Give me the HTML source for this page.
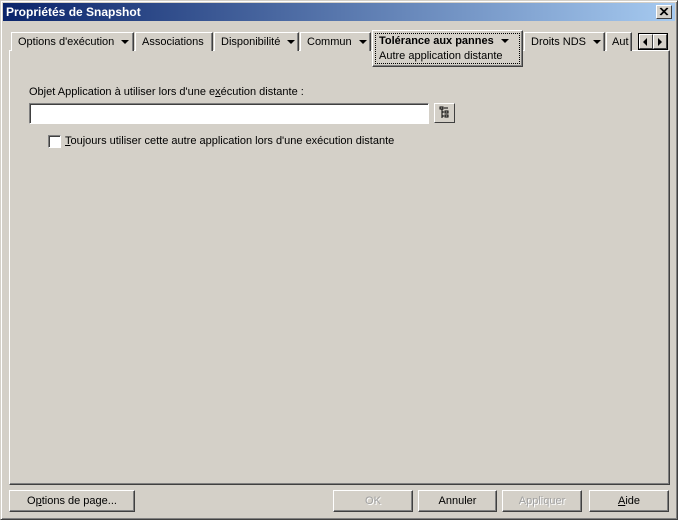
<!DOCTYPE html><html><head><style>
*{box-sizing:border-box;margin:0;padding:0}
body{width:678px;height:520px;background:#d4d0c8;font-family:"Liberation Sans",sans-serif;font-size:11px;color:#000;position:relative;overflow:hidden}
.a{position:absolute}
.win{left:0;top:0;width:678px;height:520px;border:1px solid;border-color:#d4d0c8 #404040 #404040 #d4d0c8;box-shadow:inset 1px 1px #fff,inset -1px -1px #808080}
.title{left:3px;top:3px;width:672px;height:18px;background:linear-gradient(90deg,#0a246a,#a6caf0);color:#fff;font-weight:bold;font-size:12px;padding:2px 3px}
.close{left:656px;top:5px;width:16px;height:14px;background:#d4d0c8;border:1px solid;border-color:#fff #404040 #404040 #fff}
.panel{left:9px;top:50px;width:661px;height:435px;border:1px solid;border-color:#fff #404040 #404040 #fff;box-shadow:inset -1px -1px #808080}
.tab{top:32px;height:19px;border:1px solid;border-bottom:none;border-color:#fff #404040 #fff #fff;box-shadow:inset -1px 0 #808080;padding:3px 6px;white-space:nowrap;background:#d4d0c8}
.tri{display:inline-block;width:0;height:0;border-left:4px solid transparent;border-right:4px solid transparent;border-top:4px solid #000;margin-left:7px;vertical-align:1px}
.btn{top:490px;height:22px;border:1px solid;border-color:#fff #404040 #404040 #fff;box-shadow:inset -1px -1px #808080;text-align:center;line-height:20px}
.dis{color:#a0a0a0;text-shadow:1px 1px #fff}
</style></head><body>
<div class="a win"></div>
<div class="a title">Propriétés de Snapshot</div>
<div class="a close"><svg width="14" height="12" style="position:absolute;left:0;top:0"><path d="M3 2L10 9M4 2L11 9M10 2L3 9M11 2L4 9" stroke="#000" stroke-width="1"/></svg></div>
<div class="a panel"></div>
<div class="a tab" style="left:11px;width:123px">Options d'exécution<span class="tri"></span></div>
<div class="a tab" style="left:135px;width:78px">Associations</div>
<div class="a tab" style="left:214px;width:85px">Disponibilité<span class="tri"></span></div>
<div class="a tab" style="left:300px;width:71px">Commun<span class="tri"></span></div>
<div class="a tab" style="left:524px;width:81px">Droits NDS<span class="tri"></span></div>
<div class="a tab" style="left:606px;width:26px;overflow:hidden;padding-left:5px">Aut</div>
<div class="a" style="left:372px;top:30px;width:151px;height:37px;background:#d4d0c8;border:1px solid;border-color:#fff #404040 #404040 #fff;box-shadow:inset -1px -1px #808080"></div>
<div class="a" style="left:375px;top:33px;width:145px;height:31px;border:1px dotted #000"></div>
<div class="a" style="left:379px;top:35px;font-weight:bold">Tolérance aux pannes<span class="tri"></span></div>
<div class="a" style="left:379px;top:50px">Autre application distante</div>
<div class="a" style="left:638px;top:33px;width:30px;height:17px;border:1px solid #000;background:#d4d0c8"></div>
<div class="a" style="left:639px;top:34px;width:14px;height:15px;border:1px solid;border-color:#fff #404040 #404040 #fff"><div class="a" style="left:3px;top:3px;border-top:4px solid transparent;border-bottom:4px solid transparent;border-right:4px solid #000"></div></div>
<div class="a" style="left:653px;top:34px;width:14px;height:15px;border:1px solid;border-color:#fff #404040 #404040 #fff"><div class="a" style="left:4px;top:3px;border-top:4px solid transparent;border-bottom:4px solid transparent;border-left:4px solid #000"></div></div>
<div class="a" style="left:29px;top:86px">Objet Application à utiliser lors d'une e<u>x</u>écution distante :</div>
<div class="a" style="left:29px;top:103px;width:400px;height:21px;background:#fff;border:1px solid;border-color:#808080 #fff #fff #808080;box-shadow:inset 1px 1px #404040"></div>
<div class="a" style="left:434px;top:103px;width:21px;height:20px;border:1px solid;border-color:#fff #404040 #404040 #fff"><svg width="19" height="18" style="position:absolute;left:0;top:0"><path d="M5 3h3v2h-3zM7 5v9M7 8h2M7 12h2M10 7h3v2h-3zM10 11h3v2h-3zM9 4h4" stroke="#000" fill="none" stroke-width="1"/></svg></div>
<div class="a" style="left:48px;top:135px;width:13px;height:13px;background:#fff;border:1px solid;border-color:#808080 #fff #fff #808080;box-shadow:inset 1px 1px #404040"></div>
<div class="a" style="left:65px;top:135px"><u>T</u>oujours utiliser cette autre application lors d'une exécution distante</div>
<div class="a btn" style="left:9px;width:126px">O<u>p</u>tions de page...</div>
<div class="a btn dis" style="left:333px;width:80px">OK</div>
<div class="a btn" style="left:418px;width:79px">Annuler</div>
<div class="a btn dis" style="left:502px;width:80px">Appliquer</div>
<div class="a btn" style="left:589px;width:80px"><u>A</u>ide</div>
</body></html>
